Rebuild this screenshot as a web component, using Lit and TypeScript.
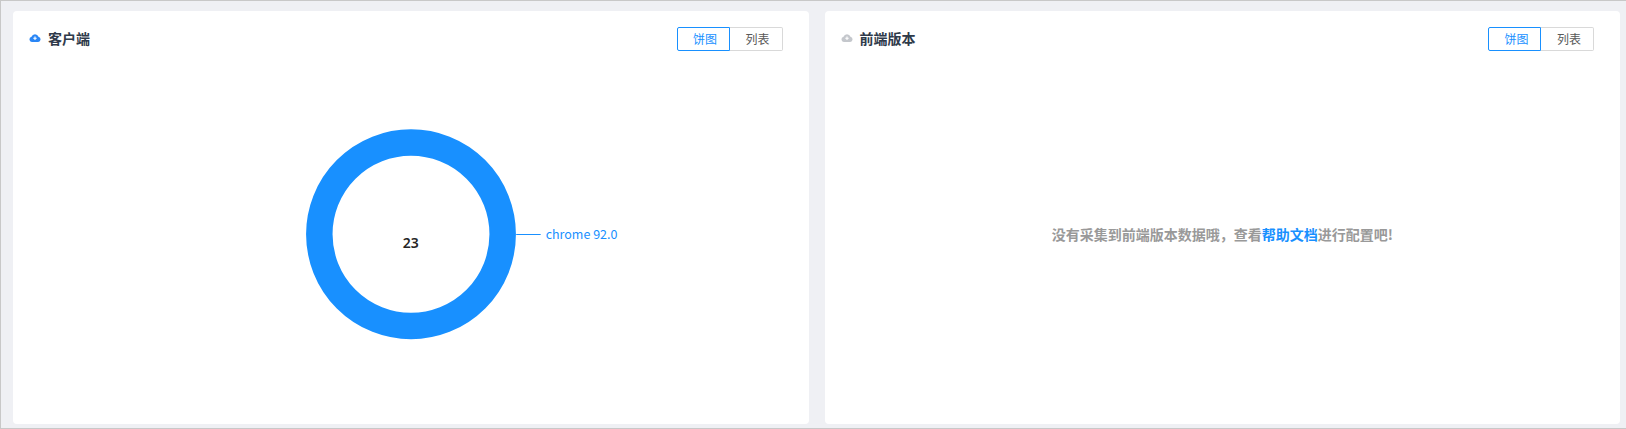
import { LitElement, html, css } from "lit";
import { customElement, property } from "lit/decorators.js";

const cloud = () => html`<svg class="cloud" viewBox="0 0 12 8" width="12" height="8" aria-hidden="true">
  <path d="M2.8 8A2.7 2.7 0 0 1 2.5 2.7 3.7 3.7 0 0 1 9.5 2.7 2.7 2.7 0 0 1 9.2 8Z" fill="currentColor"></path>
  <path d="M6 2.6v3.4M4.3 4.3h3.4" stroke="#fff" stroke-width="1.1" fill="none"></path>
</svg>`;

@customElement("panel-card")
class PanelCard extends LitElement {
  @property() heading = "";
  @property({ type: Boolean, reflect: true }) active = false;
  static styles = css`
    :host { flex: 1 1 0; min-width: 0; background: #fff; border-radius: 4px; display: flex; flex-direction: column; }
    .head { display: flex; align-items: center; justify-content: space-between; padding: 16px 26px 0 16px; height: 23px; }
    .title { display: flex; align-items: center; gap: 7px; font-size: 14px; font-weight: 700; color: #2f3a4a; line-height: 20px; margin-top: -2px; }
    .cloud { color: #c4c7cc; flex: none; margin-top: 1px; }
    :host([active]) .cloud { color: #2a86f5; }
    .seg { display: flex; height: 24px; font-size: 12px; line-height: 22px; color: #595959; }
    .seg span { box-sizing: border-box; width: 53px; padding-left: 4px; text-align: center; border: 1px solid #d9d9d9; }
    .seg .on { color: #1890ff; border-color: #1890ff; border-radius: 2px 0 0 2px; }
    .seg .off { border-left: 0; border-radius: 0 2px 2px 0; }
    .body { flex: 1; min-height: 0; display: flex; align-items: center; justify-content: center; }
  `;
  render() {
    return html`<div class="head">
        <div class="title">${cloud()}<span>${this.heading}</span></div>
        <div class="seg"><span class="on">饼图</span><span class="off">列表</span></div>
      </div>
      <div class="body"><slot></slot></div>`;
  }
}

@customElement("app-root")
class AppRoot extends LitElement {
  static styles = css`
    :host { display: flex; box-sizing: border-box; width: 1626px; height: 429px; gap: 16px; padding: 10px 6px 4px 12px; background: #eff0f4; border: 1px solid #c8c8c8; border-width: 1px 0 1px 1px; font-family: "Noto Sans CJK SC", "Noto Sans", sans-serif; }
    .chart { display: block; width: 796px; height: 350px; }
    .label { font-size: 12.5px; fill: #1890ff; }
    .total { font-size: 14px; font-weight: 600; fill: #262626; font-family: "Noto Sans", sans-serif; }
    .empty { font-size: 14px; font-weight: 700; color: #999; margin-top: -7px; }
    .empty a { color: #1890ff; text-decoration: none; }
  `;
  render() {
    return html`
      <panel-card heading="客户端" active>
        <svg class="chart" viewBox="0 0 796 350">
          <circle cx="398.25" cy="172.25" r="91.75" fill="none" stroke="#1890ff" stroke-width="26.5"></circle>
          <path d="M503.5 172.5H528" stroke="#1890ff" stroke-width="1" fill="none"></path>
          <text class="label" x="533" y="177">chrome 92.0</text>
          <text class="total" x="398" y="186" text-anchor="middle">23</text>
        </svg>
      </panel-card>
      <panel-card heading="前端版本">
        <div class="empty">没有采集到前端版本数据哦，查看<a>帮助文档</a>进行配置吧!</div>
      </panel-card>`;
  }
}
